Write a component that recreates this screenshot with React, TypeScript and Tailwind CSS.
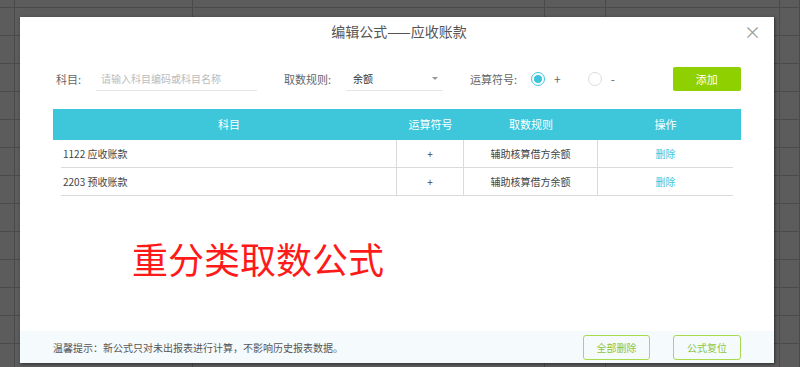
import React from "react";

const FONT = { fontFamily: '"Microsoft YaHei", "Noto Sans CJK SC", "Noto Sans", sans-serif' };

const ROWS = [
  { subject: "1122 应收账款", op: "+", rule: "辅助核算借方余额" },
  { subject: "2203 预收账款", op: "+", rule: "辅助核算借方余额" },
];

const COLS = "grid grid-cols-[336px_67px_134px_135px]";

function SheetBackdrop() {
  // spreadsheet behind the dialog
  const cols = [15, 178, 352, 61, 174, 20];
  return (
    <div className="flex h-full w-full">
      {cols.map((w, i) => (
        <div key={i} className="h-full shrink-0 border-r border-[#4a4a4a]" style={{ width: w }}>
          {Array.from({ length: 14 }).map((_, r) => (
            <div key={r} className={`border-b border-[#4a4a4a] ${r === 0 ? "h-[8px]" : "h-[28px]"}`} />
          ))}
        </div>
      ))}
    </div>
  );
}

function Radio({ checked, label }: { checked?: boolean; label: string }) {
  return (
    <div className="flex items-center gap-[9px]">
      <span
        className={`flex h-[14px] w-[14px] items-center justify-center rounded-full border ${
          checked ? "border-[#3ec5dc]" : "border-[#dcdcdc]"
        }`}
      >
        {checked && <span className="h-[8px] w-[8px] rounded-full bg-[#3ec5dc]" />}
      </span>
      <span className="text-[12px] text-[#666]">{label}</span>
    </div>
  );
}

export default function App() {
  return (
    <div className="relative h-[367px] w-[800px] overflow-hidden bg-[#5c5c5c]" style={FONT}>
      <div className="absolute inset-0">
        <SheetBackdrop />
      </div>

      <div className="absolute left-[20px] top-[17px] flex h-[346px] w-[754px] flex-col bg-white shadow-[1px_1px_3px_rgba(0,0,0,0.5)]">
        {/* title */}
        <div className="relative flex h-[28px] items-center justify-center pl-[4px] pt-[1px]">
          <span className="text-[14px] text-[#555]">编辑公式——应收账款</span>
          <span className="absolute right-[13px] top-[6px] text-[17px] leading-none text-[#9a9a9a]">×</span>
        </div>

        {/* form */}
        <div className="mt-[22px] flex h-[24px] items-center text-[11px] text-[#666]">
          <span className="ml-[36px] w-[40px]">科目:</span>
          <div className="flex h-[24px] w-[161px] items-center border-b border-[#e6e6e6] pl-[5px] text-[10px] text-[#bbb]">
            请输入科目编码或科目名称
          </div>
          <span className="ml-[27px] w-[62px]">取数规则:</span>
          <div className="flex h-[24px] w-[97px] items-center justify-between border-b border-[#e6e6e6] pl-[7px] pr-[5px] text-[10px] text-[#333]">
            余额
            <span className="h-0 w-0 border-x-[3px] border-t-[3px] border-x-transparent border-t-[#999]" />
          </div>
          <span className="ml-[27px] w-[61px]">运算符号:</span>
          <Radio checked label="+" />
          <div className="ml-[27px]">
            <Radio label="-" />
          </div>
          <button className="ml-[58px] h-[24px] w-[68px] rounded-[2px] bg-[#8fd000] text-[11px] text-white">
            添加
          </button>
        </div>

        {/* table */}
        <div className="ml-[33px] mt-[18px] w-[688px]">
          <div className={`${COLS} h-[31px] bg-[#3ec6db] px-2 text-[11px] text-white`}>
            {["科目", "运算符号", "取数规则", "操作"].map((h) => (
              <div key={h} className="flex items-center justify-center">
                {h}
              </div>
            ))}
          </div>
          <div className="mx-2">
            {ROWS.map((r) => (
              <div key={r.subject} className={`${COLS} h-[28px] border-b border-[#dadada] text-[10px] text-[#444]`}>
                <div className="flex items-center border-r border-[#dadada] pl-[2px]">{r.subject}</div>
                <div className="flex items-center justify-center border-r border-[#dadada]">{r.op}</div>
                <div className="flex items-center justify-center border-r border-[#dadada]">{r.rule}</div>
                <div className="flex items-center justify-center text-[#3ec6db]">删除</div>
              </div>
            ))}
          </div>
        </div>

        {/* annotation */}
        <div className="ml-[112px] mt-[38px] text-[36px] leading-[48px] text-[#ff1a1a]">重分类取数公式</div>

        {/* footer */}
        <div className="mt-auto flex h-[32px] items-center bg-[#f5fafd] pl-[33px] text-[10px] text-[#555]">
          <span>温馨提示：新公式只对未出报表进行计算，不影响历史报表数据。</span>
          <div className="ml-auto mr-[33px] flex gap-[23px]">
            <button className="h-[25px] w-[67px] rounded-[3px] border border-[#a9da4e] text-[10px] text-[#8cc63e]">
              全部删除
            </button>
            <button className="h-[25px] w-[68px] rounded-[3px] border border-[#a9da4e] text-[10px] text-[#8cc63e]">
              公式复位
            </button>
          </div>
        </div>
      </div>
    </div>
  );
}
